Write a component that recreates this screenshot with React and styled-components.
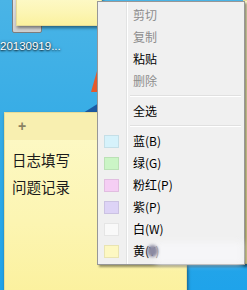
import React from "react";
import styled, { createGlobalStyle } from "styled-components";

const GlobalStyle = createGlobalStyle`
  html, body {
    margin: 0;
    padding: 0;
    overflow: hidden;
  }
  body {
    font-family: "Noto Sans CJK SC", "Liberation Sans", sans-serif;
  }
`;

const menuItems = [
  { label: "剪切", disabled: true },
  { label: "复制", disabled: true },
  { label: "粘贴" },
  { label: "删除", disabled: true },
  { sep: true },
  { label: "全选" },
  { sep: true },
  { label: "蓝(B)", swatch: "#d6f2fb" },
  { label: "绿(G)", swatch: "#cbf5c6" },
  { label: "粉红(P)", swatch: "#f5cef4" },
  { label: "紫(P)", swatch: "#ddd3f6" },
  { label: "白(W)", swatch: "#f9f9f9" },
  { label: "黄(Y)", swatch: "#fdf8c2" },
];

const App = () => {
  return (
    <>
      <GlobalStyle />
      <Desktop>
        <Shapes width="247" height="290" viewBox="0 0 247 290">
          <polygon points="99,64 99,92 91,92" fill="#e4592b" />
          <polygon points="99,103 99,113 83,113" fill="#1c5aa2" />
        </Shapes>

        <FileIcon>
          <div className="thumb" />
          <span>20130919...</span>
        </FileIcon>

        <Note $left={16} $top={-4} $width={84} $height={28} />

        <Note $left={243} $top={0} $width={20} $height={262}>
          <SideText>
            <p>日志</p>
            <p>问题</p>
          </SideText>
        </Note>

        <Note $left={4} $top={112} $width={181} $height={180}>
          <NoteHeader>+</NoteHeader>
          <NoteBody>
            <p>日志填写</p>
            <p>问题记录</p>
          </NoteBody>
        </Note>

        <Menu>
          {menuItems.map((item, i) =>
            item.sep ? (
              <Separator key={i} />
            ) : (
              <Item key={i} $disabled={item.disabled}>
                <Gutter>{item.swatch && <Swatch $color={item.swatch} />}</Gutter>
                <Label>{item.label}</Label>
              </Item>
            )
          )}
        </Menu>

        <Haze />
        <CursorDot />
      </Desktop>
    </>
  );
};

const Desktop = styled.div`
  position: relative;
  width: 247px;
  height: 290px;
  overflow: hidden;
  background: linear-gradient(180deg, #4ab4e6 0%, #33abe6 50%, #1fa3ea 100%);
`;

const Shapes = styled.svg`
  position: absolute;
  left: 0;
  top: 0;
`;

const FileIcon = styled.div`
  position: absolute;
  left: 0;
  top: 0;
  width: 70px;
  & .thumb {
    position: absolute;
    left: 12px;
    top: -4px;
    width: 28px;
    height: 35px;
    background: linear-gradient(180deg, #e6e6e6, #cfcfcf);
    border: 1px solid #7d7d7d;
    border-radius: 2px;
  }
  & span {
    position: absolute;
    left: 0;
    top: 40px;
    font-family: "Liberation Sans", sans-serif;
    font-size: 11.5px;
    color: #fff;
    white-space: nowrap;
    text-shadow: 0 1px 2px rgba(0, 0, 0, 0.8), 0 0 3px rgba(0, 0, 0, 0.5);
  }
`;

const Note = styled.div`
  position: absolute;
  left: ${(p) => p.$left}px;
  top: ${(p) => p.$top}px;
  width: ${(p) => p.$width}px;
  height: ${(p) => p.$height}px;
  display: flex;
  flex-direction: column;
  overflow: hidden;
  background: linear-gradient(180deg, #fdf9c8 0%, #fcf5b2 60%, #fbf19e 100%);
  border: 1px solid #e6dc98;
  box-shadow: 1px 2px 3px rgba(0, 0, 0, 0.45);
`;

const NoteHeader = styled.div`
  height: 27px;
  flex-shrink: 0;
  background: #f8efb0;
  color: #8a8262;
  font-family: "Liberation Sans", sans-serif;
  font-weight: bold;
  font-size: 14px;
  line-height: 26px;
  padding-left: 13px;
`;

const NoteBody = styled.div`
  padding: 6px 0 0 7px;
  & p {
    margin: 0;
    font-size: 14.5px;
    line-height: 27px;
    color: #1a1a1a;
  }
`;

const SideText = styled.div`
  padding: 48px 0 0 2px;
  & p {
    margin: 0;
    font-size: 14.5px;
    line-height: 22px;
    color: #222;
    white-space: nowrap;
  }
`;

const Menu = styled.div`
  position: absolute;
  left: 97px;
  top: 1px;
  width: 142px;
  display: flex;
  flex-direction: column;
  padding: 2px;
  background: #f0f0f0;
  border: 1px solid #979797;
  box-shadow: 2px 2px 2px rgba(0, 0, 0, 0.4);
  background-image: linear-gradient(
    90deg,
    transparent 28px,
    #e2e3e3 28px,
    #e2e3e3 29px,
    #ffffff 29px,
    #ffffff 30px,
    transparent 30px
  );
`;

const Item = styled.div`
  display: flex;
  align-items: center;
  height: 22px;
  color: ${(p) => (p.$disabled ? "#8d8d8d" : "#000")};
`;

const Gutter = styled.div`
  width: 30px;
  flex-shrink: 0;
  display: flex;
  align-items: center;
`;

const Swatch = styled.div`
  margin-left: 4px;
  width: 15px;
  height: 13px;
  background: ${(p) => p.$color};
  border: 1px solid rgba(0, 0, 0, 0.08);
  box-sizing: border-box;
`;

const Label = styled.span`
  padding-left: 3px;
  font-size: 12px;
  line-height: 22px;
  white-space: nowrap;
`;

const Separator = styled.div`
  height: 8px;
  margin-left: 30px;
  margin-right: 1px;
  display: flex;
  flex-direction: column;
  justify-content: center;
  &::before {
    content: "";
    height: 1px;
    background: #e0e0e0;
  }
  &::after {
    content: "";
    height: 1px;
    background: #ffffff;
  }
`;

const Haze = styled.div`
  position: absolute;
  left: 156px;
  top: 242px;
  width: 86px;
  height: 22px;
  background: #f6f6f8;
  filter: blur(3px);
`;

const CursorDot = styled.div`
  position: absolute;
  left: 147px;
  top: 245px;
  width: 11px;
  height: 12px;
  border-radius: 50%;
  background: #8b8aa2;
  filter: blur(1.5px);
`;

export default App;
